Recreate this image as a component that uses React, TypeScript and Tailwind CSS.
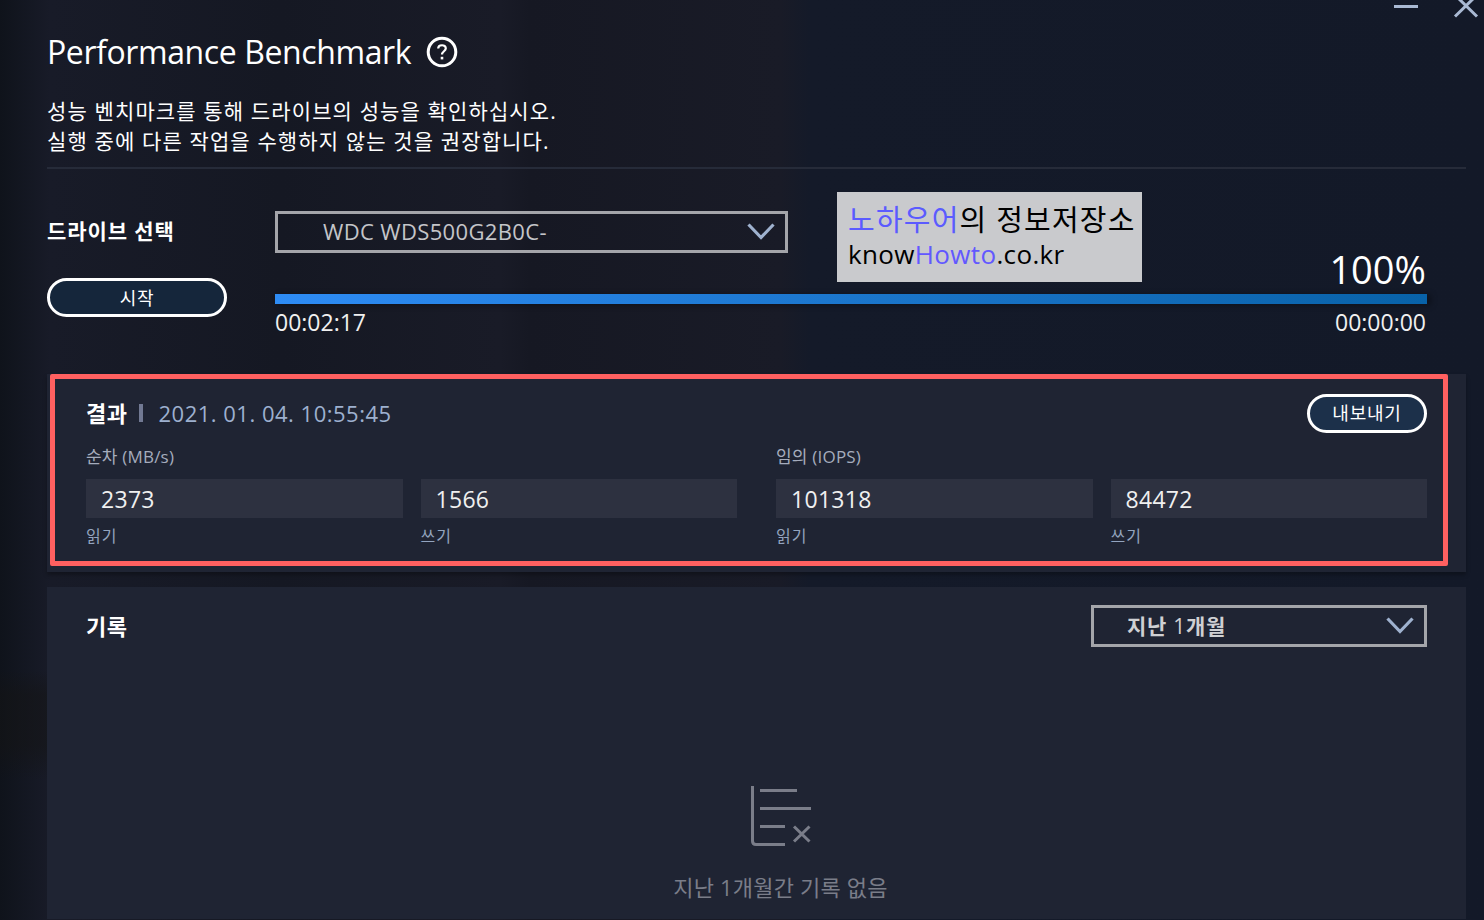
import React from 'react';

/**
 * Benchmark result groups, each holding a read and a write value
 */
const RESULT_GROUPS = [
  { id: 'sequential', title: '순차 (MB/s)', read: '2373', write: '1566' },
  { id: 'random', title: '임의 (IOPS)', read: '101318', write: '84472' },
];

const Chevron: React.FC = () => (
  <svg width="28" height="18" viewBox="0 0 28 18" fill="none" aria-hidden="true">
    <path d="M1.5 1.5 L14 14.5 L26.5 1.5" stroke="#9fb2cf" strokeWidth="3.2" />
  </svg>
);

interface PillButtonProps {
  label: string;
  className: string;
}

const PillButton: React.FC<PillButtonProps> = ({ label, className }) => (
  <button
    type="button"
    className={`flex h-[39px] items-center justify-center rounded-full border-3 border-white text-[18px] leading-none tracking-[0.8px] text-white ${className}`}
  >
    {label}
  </button>
);

interface ValueFieldProps {
  value: string;
  label: string;
}

const ValueField: React.FC<ValueFieldProps> = ({ value, label }) => (
  <div className="flex-1">
    <div className="flex h-[39px] items-center bg-[#2d3140] pt-px pl-[15px] text-[23px] leading-[38px] tracking-[0.3px] text-[#f0f0f0]">
      {value}
    </div>
    <div className="mt-[7px] text-[16px] leading-[22px] tracking-[1px] text-[#93a4bf]">{label}</div>
  </div>
);

const WindowControls: React.FC = () => (
  <svg
    className="absolute top-0 right-0"
    width="94"
    height="20"
    viewBox="0 0 94 20"
    fill="none"
    stroke="#a9b9d3"
    strokeWidth="3"
    aria-hidden="true"
  >
    <path d="M4 6.5 H28" />
    <path d="M65 -5 L87 16.5 M87 -5 L65 16.5" />
  </svg>
);

const Header: React.FC = () => (
  <header className="h-[169px] border-b-2 border-[#262b39] pt-[30px]">
    <div className="flex h-[44px] items-center gap-[15px]">
      <h1 className="text-[32px] leading-[44px] tracking-[-0.4px]">Performance Benchmark</h1>
      <svg width="32" height="32" viewBox="0 0 32 32" fill="none" stroke="#fff" aria-hidden="true">
        <circle cx="16" cy="16" r="13.8" strokeWidth="3" />
        <path d="M12.2 12.4 C12.2 8.2 19.8 8.2 19.8 12.3 C19.8 15.2 16 15.4 16 18.6" strokeWidth="2.2" />
        <path d="M16 20.8 V23.4" strokeWidth="2.6" />
      </svg>
    </div>
    <p className="mt-[22px] text-[21px] leading-[30px] tracking-[1.13px]">
      <span className="block whitespace-nowrap">성능 벤치마크를 통해 드라이브의 성능을 확인하십시오.</span>
      <span className="block whitespace-nowrap">실행 중에 다른 작업을 수행하지 않는 것을 권장합니다.</span>
    </p>
  </header>
);

const DriveSection: React.FC = () => (
  <section className="h-[205px] pt-[42px]">
    <div className="flex h-[42px] items-center">
      <div className="w-[228px] text-[21px] font-bold tracking-[0.9px]">드라이브 선택</div>
      <div className="flex h-[42px] w-[513px] items-center justify-between border-3 border-[#a4a5aa] pr-[10px] pl-[45px]">
        <span className="pb-[2px] text-[22px] leading-[34px] tracking-[0.35px] text-[#c4c5c9]">WDC WDS500G2B0C-</span>
        <Chevron />
      </div>
    </div>
    <div className="flex pr-[39px]">
      <div className="w-[228px] pt-[25px]">
        <PillButton label="시작" className="w-[180px] bg-[#15263b]" />
      </div>
      <div className="flex-1">
        <div className="h-[41px] pr-px text-right text-[38px] leading-[32px]">100%</div>
        <div className="h-[10px] bg-linear-to-r from-[#2e8cf5] via-[#1b76cc] to-[#0862a8] shadow-[4px_1px_6px_rgba(0,0,0,0.35)]" />
        <div className="mt-[2px] flex justify-between pr-px text-[23px] leading-[32px] text-[#f0f0f0]">
          <span>00:02:17</span>
          <span>00:00:00</span>
        </div>
      </div>
    </div>
  </section>
);

const ResultPanel: React.FC = () => (
  <section className="h-[198px] bg-[#1f2433] pl-[3px] shadow-[0_3px_4px_rgba(0,0,0,0.3)]">
    <div className="h-[192px] w-[1398px] rounded-[2px] border-5 border-[#ff6060] pt-[14px] pr-[16px] pl-[31px]">
      <div className="flex h-[40px] items-center">
        <h2 className="text-[22px] font-bold tracking-[0.5px]">결과</h2>
        <span className="ml-[12px] h-[18px] w-[4px] bg-[#717993]" />
        <span className="ml-[15px] text-[22px] tracking-[0.5px] text-[#9db0cf]">2021. 01. 04. 10:55:45</span>
        <PillButton label="내보내기" className="ml-auto w-[120px] bg-[#1c304a]" />
      </div>
      <div className="mt-[13px] flex gap-[39px]">
        {RESULT_GROUPS.map(({ id, title, read, write }) => (
          <div key={id} className="flex-1">
            <div className="h-[33px] text-[17px] leading-[22px] tracking-[0.2px] text-[#a5acbd]">{title}</div>
            <div className="flex gap-[18px]">
              <ValueField value={read} label="읽기" />
              <ValueField value={write} label="쓰기" />
            </div>
          </div>
        ))}
      </div>
    </div>
  </section>
);

const EmptyChartIcon: React.FC = () => (
  <svg width="62" height="62" viewBox="0 0 62 62" fill="none" stroke="#7a7d89" strokeWidth="3" aria-hidden="true">
    <path d="M2.5 1 V56 Q2.5 59.5 6 59.5 H35" />
    <path d="M10 5.5 H47 M10 23.5 H61 M10 41.5 H35" />
    <path d="M44 41.5 L59.5 56.5 M59.5 41.5 L44 56.5" />
  </svg>
);

const HistoryPanel: React.FC = () => (
  <section className="mt-[15px] h-[332px] bg-[#1f2433] pt-[18px] pr-[39px] pl-[39px]">
    <div className="flex h-[42px] items-center justify-between">
      <h2 className="text-[22px] font-bold tracking-[0.5px]">기록</h2>
      <div className="flex h-[42px] w-[336px] items-center justify-between border-3 border-[#a4a5aa] pr-[10px] pl-[33px]">
        <span className="text-[21px] leading-[35px] font-bold tracking-[0.7px] text-[#cfd0d3]">
          지난 <span className="font-normal">1</span>개월
        </span>
        <Chevron />
      </div>
    </div>
    <div className="mt-[138px] ml-[48px] flex flex-col items-center">
      <EmptyChartIcon />
      <p className="mt-[25px] text-[22px] leading-[30px] tracking-[0.2px] text-[#7a7d89]">지난 1개월간 기록 없음</p>
    </div>
  </section>
);

/**
 * Site label laid over the window
 */
const SiteLabel: React.FC = () => (
  <div className="absolute top-[192px] left-[837px] h-[90px] w-[305px] bg-[#c9cacd] pt-[10px] pl-[11px] whitespace-nowrap text-black">
    <div className="text-[29px] leading-[35px] tracking-[1.2px]">
      <span className="text-[#5b5bff]">노하우어</span>의 정보저장소
    </div>
    <div className="text-[26px] leading-[34px] tracking-[0.35px]">
      know<span className="text-[#6258ff]">Howto</span>.co.kr
    </div>
  </div>
);

const App: React.FC = () => (
  <main className="relative h-[920px] w-[1484px] overflow-hidden bg-[linear-gradient(180deg,transparent_670px,rgba(20,20,20,0.5)_695px,rgba(20,20,20,0.5)_745px,transparent_780px),linear-gradient(90deg,#0f131b_0px,#181b28_50px,#151823_280px,#191b27_500px,#161823_530px,#191b27_780px,#141a29_810px,#131928_1484px)] bg-[size:47px_100%,100%_100%] bg-no-repeat pr-[18px] pl-[47px] font-['Open_Sans','Noto_Sans_CJK_KR',sans-serif] text-white">
    <WindowControls />
    <Header />
    <DriveSection />
    <ResultPanel />
    <HistoryPanel />
    <SiteLabel />
  </main>
);

export default App;
